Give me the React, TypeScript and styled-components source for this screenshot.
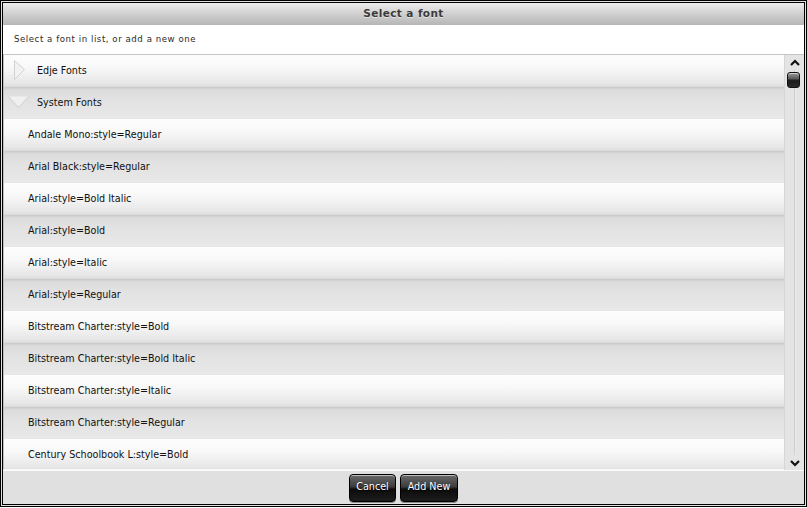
import React from "react";
import styled, { createGlobalStyle } from "styled-components";

const Global = createGlobalStyle`
  html, body { margin: 0; padding: 0; background: #ffffff; }
  body { font-family: "DejaVu Sans", "Liberation Sans", sans-serif; }
`;

const Window = styled.div`
  box-sizing: border-box;
  width: 807px;
  height: 507px;
  border: 3px double #000;
  display: flex;
  flex-direction: column;
  background: #e0e0e0;
`;

const TitleBar = styled.div`
  height: 22px;
  flex: none;
  box-sizing: border-box;
  padding-bottom: 2px;
  display: flex;
  align-items: center;
  justify-content: center;
  background: linear-gradient(#ececec, #d2d2d2 45%, #b6b6b6);
  font-weight: bold;
  font-size: 10.5px;
  letter-spacing: 0.4px;
  color: #3a3a3a;
  text-shadow: 0 1px 0 rgba(255,255,255,0.5);
`;

const Subtitle = styled.div`
  height: 30px;
  flex: none;
  box-sizing: border-box;
  padding-bottom: 2px;
  display: flex;
  align-items: center;
  padding-left: 11px;
  background: #ffffff;
  font-size: 8.6px;
  letter-spacing: 0.55px;
  color: #2a2a2a;
  border-bottom: 1px solid #c4c4c4;
`;

const ListArea = styled.div`
  height: 415px;
  flex: none;
  display: flex;
  background: #e6e6e6;
`;

const List = styled.div`
  flex: 1;
  overflow: hidden;
  border-left: 1px solid #bdbdbd;
  border-bottom: 1px solid #f6f6f6;
`;

const Row = styled.div<{ $alt: boolean; $indent: number }>`
  height: 32px;
  box-sizing: border-box;
  display: flex;
  align-items: center;
  padding-left: ${(p) => p.$indent}px;
  padding-bottom: 2px;
  position: relative;
  font-size: 9.6px;
  color: #111;
  background: ${(p) =>
    p.$alt
      ? "linear-gradient(#c9c9c9, #dcdcdc 3px, #e2e2e2 40%, #e8e8e8)"
      : "linear-gradient(#fdfdfd, #f8f8f8 40%, #e6e6e6 90%, #dadada)"};
`;

const Arrow = styled.svg`
  position: absolute;
  left: 0;
  top: 0;
`;

const Scrollbar = styled.div`
  width: 19px;
  flex: none;
  display: flex;
  flex-direction: column;
  align-items: center;
  background: #e4e4e4;
  border-left: 1px solid #d6d6d6;
`;

const ScrollBtn = styled.div`
  height: 15px;
  display: flex;
  align-items: center;
  justify-content: center;
  flex: none;
`;

const Track = styled.div`
  flex: 1;
  width: 100%;
  display: flex;
  justify-content: center;
  position: relative;
  &::before {
    content: "";
    width: 2px;
    height: 100%;
    background: linear-gradient(90deg, #bdbdbd, #fafafa);
  }
`;

const Thumb = styled.div`
  position: absolute;
  top: 2px;
  left: 2px;
  width: 13px;
  height: 16px;
  box-sizing: border-box;
  border-radius: 3px;
  border: 1px solid #111;
  background: linear-gradient(#9a9a9a, #5a5a5a 40%, #1a1a1a 55%, #2a2a2a);
  box-shadow: inset 0 1px 0 #d0d0d0;
`;

const Footer = styled.div`
  flex: 1;
  display: flex;
  align-items: center;
  justify-content: center;
  gap: 4px;
  border-top: 1px solid #fafafa;
  background: #e0e0e0;
`;

const Button = styled.button<{ $w: number }>`
  width: ${(p) => p.$w}px;
  height: 28px;
  box-sizing: border-box;
  border: 1px solid #000;
  border-radius: 4px;
  background: linear-gradient(#6a6a6a, #3c3c3c 45%, #0c0c0c 55%, #1c1c1c);
  box-shadow: inset 0 1px 0 #bdbdbd, 0 1px 0 #8a8a8a;
  color: #ffffff;
  font-family: "DejaVu Sans", sans-serif;
  font-size: 9.6px;
  padding: 0 0 2px;
  text-shadow: 0 1px 1px #000;
`;

const items = [
  "Andale Mono:style=Regular",
  "Arial Black:style=Regular",
  "Arial:style=Bold Italic",
  "Arial:style=Bold",
  "Arial:style=Italic",
  "Arial:style=Regular",
  "Bitstream Charter:style=Bold",
  "Bitstream Charter:style=Bold Italic",
  "Bitstream Charter:style=Italic",
  "Bitstream Charter:style=Regular",
  "Century Schoolbook L:style=Bold",
];

export default function App() {
  return (
    <>
      <Global />
      <Window>
        <TitleBar>Select a font</TitleBar>
        <Subtitle>Select a font in list, or add a new one</Subtitle>
        <ListArea>
          <List>
            <Row $alt={false} $indent={33}>
              <Arrow width="30" height="32" viewBox="0 0 30 32">
                <path d="M10.5 5.5 L20.5 14.5 L10.5 24.5 Z" fill="#f2f2f2" stroke="#d2d2d2" strokeWidth="1" />
              </Arrow>
              Edje Fonts
            </Row>
            <Row $alt={true} $indent={33}>
              <Arrow width="30" height="32" viewBox="0 0 30 32">
                <path d="M4.5 9.5 L24.5 9.5 L14.5 20.5 Z" fill="#f0f0f0" />
                <path d="M4.5 9.5 L14.5 20.5 L24.5 9.5" fill="none" stroke="#cfcfcf" strokeWidth="1" />
              </Arrow>
              System Fonts
            </Row>
            {items.map((t, i) => (
              <Row key={t} $alt={i % 2 === 1} $indent={24}>
                {t}
              </Row>
            ))}
          </List>
          <Scrollbar>
            <ScrollBtn>
              <svg width="12" height="8" viewBox="0 0 12 8">
                <path d="M2 6 L6 2 L10 6" fill="none" stroke="#111" strokeWidth="2.2" />
              </svg>
            </ScrollBtn>
            <Track>
              <Thumb />
            </Track>
            <ScrollBtn>
              <svg width="12" height="8" viewBox="0 0 12 8">
                <path d="M2 2 L6 6 L10 2" fill="none" stroke="#111" strokeWidth="2.2" />
              </svg>
            </ScrollBtn>
          </Scrollbar>
        </ListArea>
        <Footer>
          <Button $w={47}>Cancel</Button>
          <Button $w={58}>Add New</Button>
        </Footer>
      </Window>
    </>
  );
}
